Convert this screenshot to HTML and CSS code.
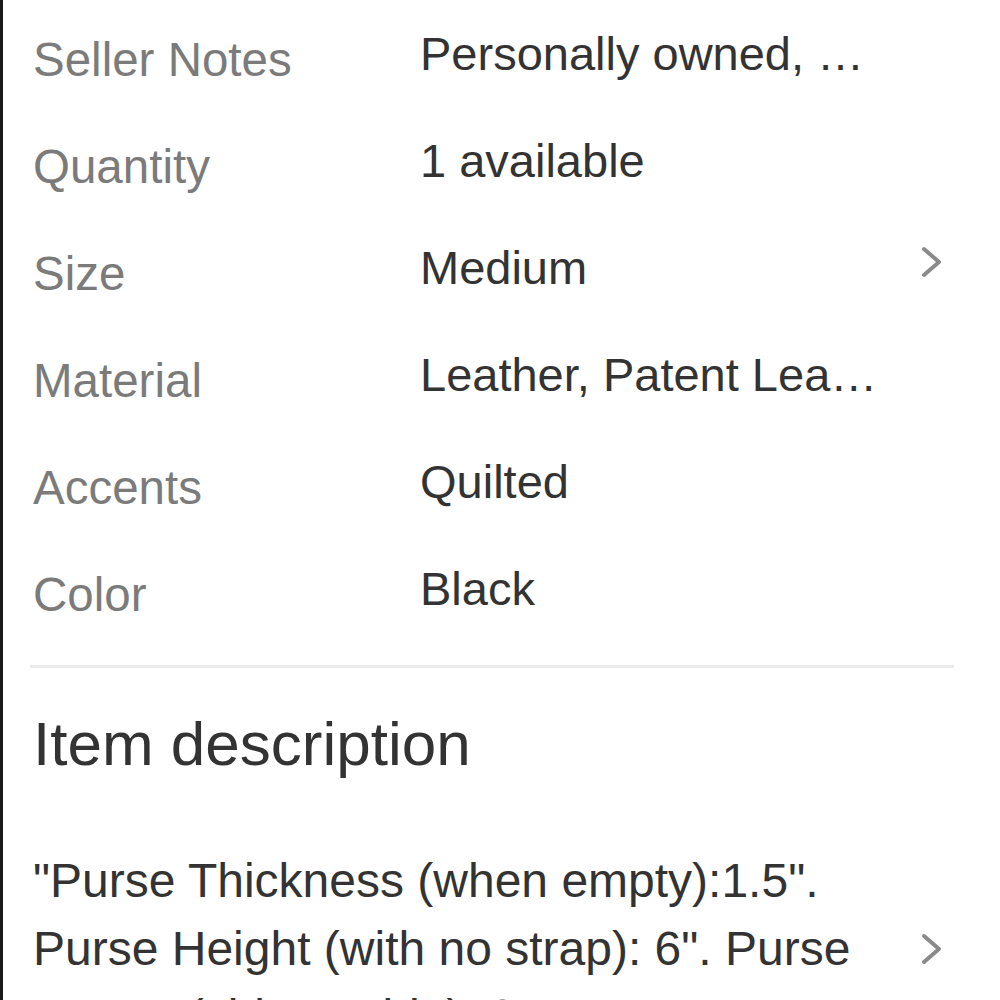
FILE: index.html
```html
<!DOCTYPE html>
<html lang="en">
<head>
<meta charset="utf-8">
<title>Item specifics</title>
<link rel="stylesheet" href="styles.css">
</head>
<body>
<main class="panel">
  <section class="specs">
    <div class="spec-row">
      <div class="spec-label">Seller Notes</div>
      <div class="spec-value">Personally owned, …</div>
    </div>
    <div class="spec-row">
      <div class="spec-label">Quantity</div>
      <div class="spec-value">1 available</div>
    </div>
    <div class="spec-row">
      <div class="spec-label">Size</div>
      <div class="spec-value">Medium</div>
      <svg class="chevron" viewBox="0 0 24 32" aria-hidden="true"><path d="M4 3 L19 16 L4 29"/></svg>
    </div>
    <div class="spec-row">
      <div class="spec-label">Material</div>
      <div class="spec-value">Leather, Patent Lea…</div>
    </div>
    <div class="spec-row">
      <div class="spec-label">Accents</div>
      <div class="spec-value">Quilted</div>
    </div>
    <div class="spec-row">
      <div class="spec-label">Color</div>
      <div class="spec-value">Black</div>
    </div>
  </section>

  <hr class="divider">

  <section class="description">
    <h2 class="desc-title">Item description</h2>
    <div class="desc-body">
      <p class="desc-text">"Purse Thickness (when empty):1.5". Purse Height (with no strap): 6". Purse across (side to side): 9".</p>
      <svg class="chevron" viewBox="0 0 24 32" aria-hidden="true"><path d="M4 3 L19 16 L4 29"/></svg>
    </div>
  </section>
</main>
</body>
</html>
```

FILE: styles.css
```css
html, body {
  margin: 0;
  padding: 0;
  height: 1000px;
  overflow: hidden;
  background: #ffffff;
}

body {
  font-family: "Liberation Sans", Arial, Helvetica, sans-serif;
  color: #333333;
}

/* Detail panel with its dark left edge */
.panel {
  height: 1000px;
  border-left: 3px solid #1a1a1a;
  padding: 6px 46px 0 30px;
  box-sizing: border-box;
}

.specs {
  display: flex;
  flex-direction: column;
}

.spec-row {
  display: flex;
  align-items: flex-start;
  height: 107px;
}

.spec-label {
  width: 387px;
  flex-shrink: 0;
  font-size: 47.5px;
  line-height: 107px;
  color: #7b7b7b;
}

/* Values sit a few pixels above their labels */
.spec-value {
  flex: 1;
  font-size: 47px;
  line-height: 95px;
  color: #333333;
  white-space: nowrap;
}

.chevron {
  width: 24px;
  height: 32px;
  flex-shrink: 0;
  margin-right: 10px;
  fill: none;
  stroke: #8a8a8a;
  stroke-width: 4;
  stroke-linecap: round;
  stroke-linejoin: round;
}

.spec-row .chevron {
  margin-top: 26px;
}

.divider {
  border: 0;
  height: 3px;
  background: #ebebeb;
  margin: 17px 0 0 -3px;
}

.description {
  padding-top: 31px;
}

.desc-title {
  margin: 0;
  font-size: 62px;
  font-weight: normal;
  line-height: 90px;
  color: #333333;
}

.desc-body {
  display: flex;
  align-items: center;
  justify-content: space-between;
  margin-top: 58px;
}

.desc-text {
  margin: 0;
  font-size: 48px;
  line-height: 68px;
  color: #333333;
  max-width: 840px;
}
```
